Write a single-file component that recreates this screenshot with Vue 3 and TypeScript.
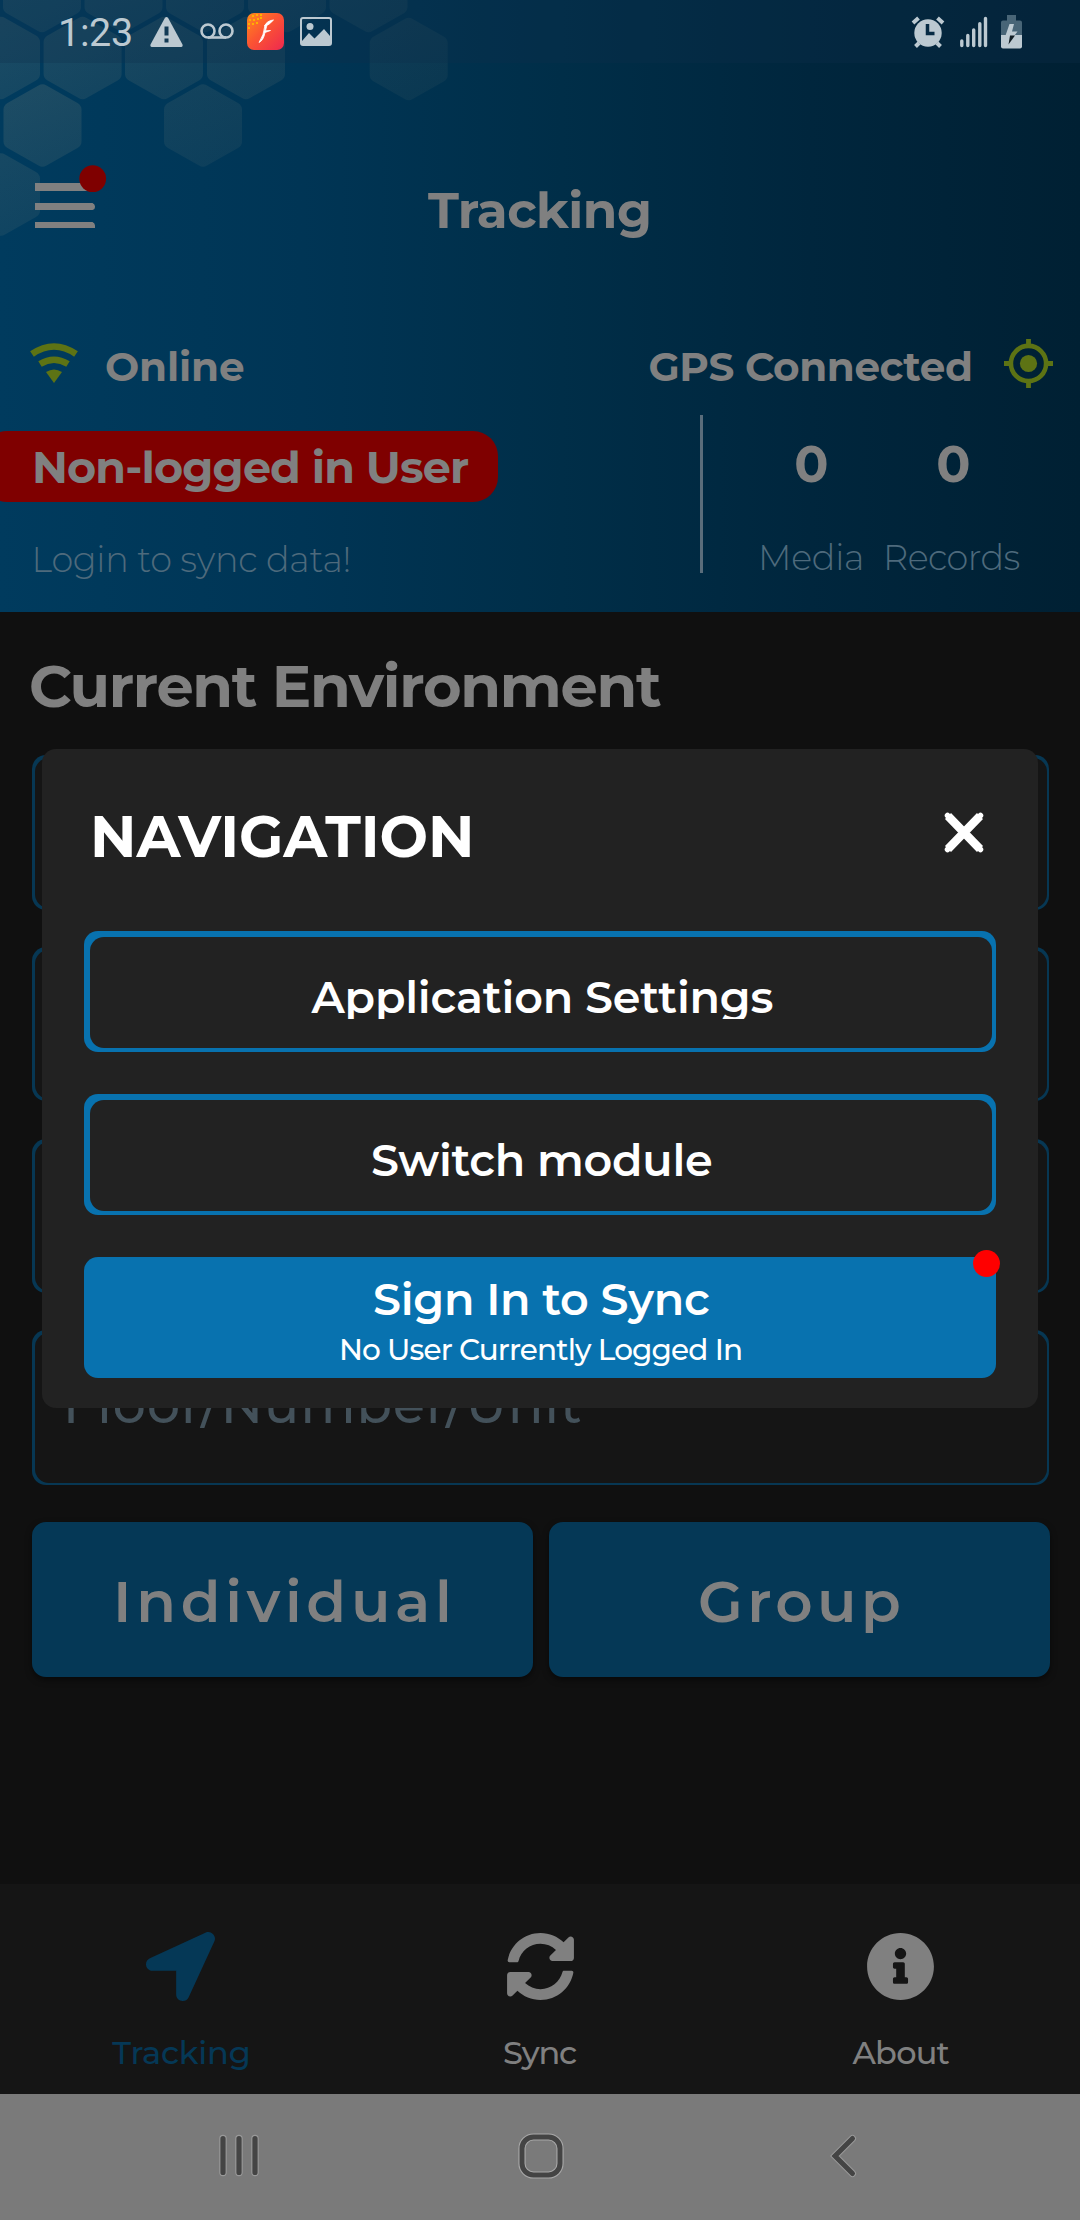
<script setup lang="ts">
import type { Directive } from 'vue'

interface Tab {
  label: string
  width: number
  icon: string
  active?: boolean
}

// Spreads a label's letters so that its visible glyphs span the given width,
// and trims the side bearings so neighbours line up with the glyph edges.
const vFit: Directive<HTMLElement, number> = {
  mounted(el, { value }) {
    const style = getComputedStyle(el)
    const ctx = document.createElement('canvas').getContext('2d')
    const text = (el.textContent ?? '').trim()
    if (!ctx || !text) return
    ctx.font = `${style.fontWeight} ${style.fontSize} ${style.fontFamily}`
    const m = ctx.measureText(text)
    const ink = m.actualBoundingBoxLeft + m.actualBoundingBoxRight
    const spacing = text.length > 1 ? (value - ink) / (text.length - 1) : 0
    el.style.letterSpacing = `${spacing}px`
    el.style.marginLeft = `${m.actualBoundingBoxLeft}px`
    el.style.marginRight = `${-(m.width - m.actualBoundingBoxRight + spacing)}px`
  },
}

const fields: string[] = ['', '', '', 'Floor/Number/Unit']

const stats = [
  { value: 0, label: 'Media', width: 99 },
  { value: 0, label: 'Records', width: 132.5 },
]

const tabs: Tab[] = [
  {
    label: 'Tracking',
    width: 136.5,
    active: true,
    icon: 'M444.52 3.52L28.74 195.42c-47.97 22.39-31.98 92.75 19.19 92.75h175.91v175.91c0 51.17 70.36 67.17 92.75 19.19l191.9-415.78c15.99-38.38-25.59-79.97-63.97-63.97z',
  },
  {
    label: 'Sync',
    width: 73,
    icon: 'M370.72 133.28C339.458 104.008 298.888 87.962 255.848 88c-77.458.068-144.328 53.178-162.791 126.85-1.344 5.363-6.122 9.15-11.651 9.15H24.103c-7.498 0-13.194-6.807-11.807-14.176C33.933 94.924 134.813 8 256 8c66.448 0 126.791 26.136 171.315 68.685L463.03 40.97C478.149 25.851 504 36.559 504 57.941V192c0 13.255-10.745 24-24 24H345.941c-21.382 0-32.09-25.851-16.971-40.971l41.75-41.749zM32 296h134.059c21.382 0 32.09 25.851 16.971 40.971l-41.75 41.75c31.262 29.273 71.835 45.319 114.876 45.28 77.418-.07 144.315-53.144 162.787-126.849 1.344-5.363 6.122-9.15 11.651-9.15h57.304c7.498 0 13.194 6.807 11.807 14.176C478.067 417.076 377.187 504 256 504c-66.448 0-126.791-26.136-171.315-68.685L48.97 471.03C33.851 486.149 8 475.441 8 454.059V320c0-13.255 10.745-24 24-24z',
  },
  {
    label: 'About',
    width: 98,
    icon: 'M256 8C119.043 8 8 119.083 8 256c0 136.997 111.043 248 248 248s248-111.003 248-248C504 119.083 392.957 8 256 8zm0 110c23.196 0 42 18.804 42 42s-18.804 42-42 42-42-18.804-42-42 18.804-42 42-42zm56 254c0 6.627-5.373 12-12 12h-88c-6.627 0-12-5.373-12-12v-24c0-6.627 5.373-12 12-12h12v-64h-12c-6.627 0-12-5.373-12-12v-24c0-6.627 5.373-12 12-12h64c6.627 0 12 5.373 12 12v100h12c6.627 0 12 5.373 12 12v24z',
  },
]

// Honeycomb cells in the header: centre x, centre y, opacity.
const cells: [number, number, number][] = [
  [42, -9, 0.13], [123.5, -9, 0.12], [205, -9, 0.11], [287, -9, 0.1], [368.5, -9, 0.09],
  [1, 58, 0.14], [82.6, 58, 0.13], [164, 58, 0.12], [246, 58, 0.11], [408.7, 59, 0.07],
  [42.5, 125.5, 0.14], [203, 125.5, 0.09],
  [1, 194.5, 0.11],
]
</script>

<template>
  <div class="screen">
    <header class="top">
      <svg class="honeycomb" width="460" height="250" viewBox="0 0 460 250">
        <defs>
          <linearGradient id="cellFill" x1="0" y1="0" x2="0.4" y2="1">
            <stop offset="0" stop-color="#d8bc90" />
            <stop offset="1" stop-color="#d8bc90" stop-opacity="0.7" />
          </linearGradient>
        </defs>
        <path
          v-for="([x, y, o], i) in cells"
          :key="i"
          :transform="`translate(${x} ${y})`"
          :opacity="o"
          fill="url(#cellFill)"
          d="M-4-40Q0-42.500 4-40L35-22.500Q39-20 39-16V16Q39 20 35 22.500L4 40Q0 42.500-4 40L-35 22.500Q-39 20-39 16V-16Q-39-20-35-22.500Z"
        />
      </svg>

      <div class="statusbar">
        <span v-fit="70" class="clock">1:23</span>
        <svg class="s-warn" width="33" height="30" viewBox="0 0 33 30">
          <path d="M15 .8Q16.500-.8 18 .8L32.500 27.500Q33 30 31 30H2Q0 30 .5 27.500Z" fill="#bcc9d1" />
          <path d="M14.500 9.500h4v9h-4zM14.500 21.500h4v4h-4z" fill="#123a55" />
        </svg>
        <svg class="s-mail" width="34" height="16" viewBox="0 0 34 16" fill="none" stroke="#bcc9d1" stroke-width="2.600">
          <circle cx="8" cy="8" r="6.500" /><circle cx="26" cy="8" r="6.500" /><path d="M8 14.500h18" />
        </svg>
        <svg class="s-app" width="37" height="37" viewBox="0 0 37 37">
          <defs>
            <linearGradient id="appFill" x1="0" y1="0" x2="1" y2="1">
              <stop offset="0" stop-color="#ff8a1c" /><stop offset=".45" stop-color="#fb5532" /><stop offset="1" stop-color="#ee2850" />
            </linearGradient>
          </defs>
          <rect width="37" height="37" rx="7" fill="url(#appFill)" />
          <path d="M5 2h2v2h-2zM9 1h2v2h-2zM13 1h2v2h-2zM2 6h2v2h-2zM6 6h2v2h-2zM10 5h2v2h-2zM1 10h2v2h-2zM5 10h2v2h-2zM9 9h2v2h-2zM1 14h2v2h-2zM13 4h2v2h-2z" fill="#ffb000" />
          <path d="M26.500 7Q20 7.500 17.500 13Q22 12.500 26.500 7ZM18 12Q17 22 12 29.500Q16.500 27.500 18 19.500L23.500 17.500L18.500 17.800L20 12Z" fill="#fff" stroke="#fff" stroke-width=".8" />
        </svg>
        <svg class="s-pic" width="32" height="29" viewBox="0 0 32 29">
          <rect x="1" y="1" width="30" height="27" rx="2" fill="none" stroke="#bcc9d1" stroke-width="2" />
          <circle cx="10" cy="9.500" r="3.500" fill="#bcc9d1" />
          <path d="M2 24L9 16L14.500 21.500L24 12L30 19V28H2Z" fill="#bcc9d1" />
        </svg>
        <span class="grow" />
        <svg width="34" height="32" viewBox="0 0 34 32">
          <path d="M8 27L4.500 30.500M26 27L29.500 30.500M2 7L7.500 2M32 7L26.500 2" stroke="#bcc9d1" stroke-width="4" />
          <circle cx="17" cy="17" r="13.700" fill="#bcc9d1" />
          <path d="M16.500 8V17.500H23.500" fill="none" stroke="#072b44" stroke-width="3.500" />
        </svg>
        <svg class="s-signal" width="28" height="32" viewBox="0 0 28 32" stroke="#bcc9d1" stroke-width="3.400" stroke-linecap="round">
          <path d="M1.800 25V29.500M7.800 19.500V29.500M13.700 14V29.500M19.800 7.800V29.500M25.500 2.500V29.500" />
        </svg>
        <svg class="s-battery" width="21" height="34" viewBox="0 0 21 34">
          <path d="M6 0h9v5.500h4q2 0 2 2V20H0V7.500q0-2 2-2h4z" fill="#486577" />
          <path d="M0 20H21V31.500q0 2-2 2H2q-2 0-2-2z" fill="#bcc9d1" />
          <path d="M8.500 9H13L11 16.500H16.500L13.500 20.500H4.500Z" fill="#bcc9d1" />
          <path d="M9 20.500H14L7.500 29.500Z" fill="#111d24" />
        </svg>
      </div>

      <div class="appbar">
        <svg class="burger" width="72" height="64" viewBox="0 0 72 64">
          <path d="M0 18H60V26H0zM0 38H57.500Q60 39 60 41.500Q60 44.500 57.500 45H0zM0 57H57.500Q60 58 60 60.500V63H0z" fill="#808080" />
          <circle cx="57.700" cy="13.700" r="13.400" fill="#7f0000" />
        </svg>
        <h1 v-fit="221" class="title">Tracking</h1>
      </div>

      <div class="connect">
        <svg class="c-icon" width="48" height="40" viewBox="0 0 48 40">
          <g fill="none" stroke="#5d7314" stroke-width="6.600">
            <path d="M2 11Q24-4 46 11" /><path d="M10 21Q24 12.500 38 21" />
          </g>
          <path d="M16 29Q24 24 32 29L24 40Z" fill="#5d7314" />
        </svg>
        <span v-fit="138" class="c-text online">Online</span>
        <span class="grow" />
        <span v-fit="321.5" class="c-text gps">GPS Connected</span>
        <svg class="c-icon" width="49" height="49" viewBox="0 0 49 49" fill="none" stroke="#5d7314">
          <circle cx="24.500" cy="24.500" r="17.600" stroke-width="4.600" />
          <circle cx="24.500" cy="24.500" r="8.600" fill="#5d7314" stroke="none" />
          <path d="M24.500 0V7M24.500 42V49M0 24.500H7M42 24.500H49" stroke-width="4.800" />
        </svg>
      </div>

      <div class="summary">
        <div class="account">
          <div class="pill"><span v-fit="434">Non-logged in User</span></div>
          <div class="hint"><span v-fit="313">Login to sync data!</span></div>
        </div>
        <div class="divider" />
        <div class="stats">
          <div v-for="s in stats" :key="s.label" class="stat">
            <span class="value">{{ s.value }}</span>
            <span v-fit="s.width" class="s-label">{{ s.label }}</span>
          </div>
        </div>
      </div>
    </header>

    <main class="body">
      <h2 class="section"><span v-fit="630">Current Environment</span></h2>
      <div class="fields">
        <div v-for="(f, i) in fields" :key="i" class="field">
          <span v-if="f" v-fit="513">{{ f }}</span>
        </div>
      </div>
      <div class="actions">
        <button class="action"><span v-fit="329">Individual</span></button>
        <button class="action"><span v-fit="199">Group</span></button>
      </div>
    </main>

    <nav class="tabs">
      <div v-for="t in tabs" :key="t.label" class="tab" :class="{ active: t.active }">
        <svg width="69" height="69" viewBox="0 0 512 512"><path :d="t.icon" fill="currentColor" /></svg>
        <span v-fit="t.width" class="t-label">{{ t.label }}</span>
      </div>
    </nav>

    <div class="sysnav">
      <svg width="44" height="46" viewBox="0 0 44 46" stroke-linecap="round">
        <path d="M6 5.500V39.500M22 5.500V39.500M38 5.500V39.500" stroke="#999" stroke-width="7.400" />
        <path d="M6 5.500V39.500M22 5.500V39.500M38 5.500V39.500" stroke="#444" stroke-width="5.200" />
      </svg>
      <svg class="home" width="46" height="46" viewBox="0 0 46 46" fill="none">
        <rect x="4" y="4" width="38" height="38" rx="11.500" stroke="#a8a8a8" stroke-width="7.200" />
        <rect x="4" y="4" width="38" height="38" rx="11.500" stroke="#444" stroke-width="5" />
      </svg>
      <svg class="back" width="30" height="46" viewBox="0 0 30 46" fill="none" stroke-linecap="round">
        <path d="M24.500 5.500L7 23L24.500 40.500" stroke="#999" stroke-width="7" />
        <path d="M24.500 5.500L7 23L24.500 40.500" stroke="#444" stroke-width="5" />
      </svg>
    </div>

    <section class="modal">
      <div class="m-head">
        <h3 v-fit="376" class="m-title">NAVIGATION</h3>
        <svg class="close" width="42" height="43" viewBox="0 0 42 43">
          <path d="M5 5L37 38M37 5L5 38" stroke="#fff" stroke-width="8.400" />
          <path d="M4.500 4.500L37.500 38.500M37.500 4.500L4.500 38.500" stroke="#fff" stroke-width="5.500" stroke-linecap="round" />
        </svg>
      </div>
      <div class="m-list">
        <button class="m-btn"><span v-fit="462" class="m-text clip">Application Settings</span></button>
        <button class="m-btn"><span v-fit="339" class="m-text">Switch module</span></button>
        <button class="m-btn primary">
          <span v-fit="335" class="m-text">Sign In to Sync</span>
          <span v-fit="399" class="m-sub">No User Currently Logged In</span>
          <i class="badge" />
        </button>
      </div>
    </section>
  </div>
</template>

<style>
body {
  margin: 0;
  background: #101010;
}
</style>

<style scoped>
.screen {
  position: relative;
  display: flex;
  flex-direction: column;
  width: 1080px;
  height: 2220px;
  overflow: hidden;
  background: #101010;
  color: #808080;
  font-family: Montserrat, Inter, 'Open Sans', sans-serif;
  white-space: nowrap;
}
h1, h2, h3 {
  margin: 0;
}
svg {
  display: block;
  flex: none;
}
button {
  margin: 0;
  padding: 0;
  border: 0;
  font-family: inherit;
  color: inherit;
}
.grow {
  flex: 1;
}

.top {
  position: relative;
  height: 612px;
  background: linear-gradient(90deg, #003b5e 0%, #003555 28%, #002e48 52%, #00263d 75%, #002033 100%);
}
.honeycomb {
  position: absolute;
  left: 0;
  top: 0;
}
.statusbar {
  position: relative;
  display: flex;
  align-items: flex-start;
  box-sizing: border-box;
  height: 63px;
  padding: 0 58px 0 61px;
  background: rgba(16, 46, 74, 0.28);
}
.statusbar svg {
  margin-top: 16px;
}
.clock {
  font: 400 39.5px/40px Roboto, sans-serif;
  color: #bcc9d1;
  padding-top: 13px;
}
.statusbar .s-warn { margin-left: 18.500px; margin-top: 17px; }
.statusbar .s-mail { margin-left: 17px; margin-top: 23px; }
.statusbar .s-app { margin-left: 13.500px; margin-top: 13px; }
.statusbar .s-pic { margin-left: 16px; margin-top: 17px; }
.statusbar .s-signal { margin-left: 15px; }
.statusbar .s-battery { margin-left: 13px; margin-top: 15px; }

.appbar {
  position: relative;
  display: grid;
  grid-template-columns: 1fr auto 1fr;
  height: 91px;
  margin-top: 102px;
  padding-right: 3px;
}
.burger {
  margin-left: 35px;
}
.title {
  font-size: 50px;
  font-weight: 700;
  line-height: 91px;
}

.connect {
  display: flex;
  align-items: center;
  height: 60px;
  margin-top: 81px;
  padding: 0 27px 0 30px;
}
.c-icon {
  margin-bottom: 8px;
}
.c-icon + .c-text {
  position: relative;
  left: 28px;
}
.c-text {
  font-size: 40.500px;
  font-weight: 700;
  line-height: 58px;
}
.gps {
  position: relative;
  left: -33px;
}

.summary {
  display: flex;
  align-items: flex-start;
}
.account {
  width: 700px;
}
.pill {
  display: flex;
  box-sizing: border-box;
  width: 516px;
  height: 71px;
  margin: 34px 0 0 -18px;
  padding-left: 53px;
  border-radius: 25px;
  background: #7f0000;
  font-size: 44.500px;
  font-weight: 700;
  line-height: 72px;
}
.hint {
  display: flex;
  margin-top: 38px;
  padding-left: 35.500px;
  color: #4e6a7c;
  font-size: 35px;
  font-weight: 300;
  line-height: 40px;
}
.divider {
  width: 3px;
  height: 158px;
  margin-top: 18px;
  background: #5a6d7b;
}
.stats {
  display: flex;
  gap: 26px;
  margin: 37px 0 0 59px;
}
.stat {
  display: flex;
  flex-direction: column;
  align-items: center;
}
.value {
  font-size: 50.500px;
  font-weight: 700;
  line-height: 60px;
}
.s-label {
  margin-top: 44px;
  color: #4e6a7c;
  font-size: 35px;
  font-weight: 300;
  line-height: 40px;
}

.body {
  height: 1272px;
  box-sizing: border-box;
  padding: 43.500px 30px 0 32px;
}
.section {
  display: flex;
  margin-left: -1px;
  font-size: 59px;
  font-weight: 700;
  line-height: 60px;
}
.fields {
  display: flex;
  flex-direction: column;
  gap: 37.300px;
  margin-top: 39.500px;
}
.field {
  position: relative;
  display: flex;
  box-sizing: border-box;
  width: 1017px;
  height: 154.500px;
  padding: 3px 0 0 36px;
  border-radius: 14px;
  background: #073753;
  color: #43515a;
  font-size: 52px;
  font-weight: 500;
  line-height: 144px;
}
.field::before {
  content: '';
  position: absolute;
  inset: 3px 2px 2px 3px;
  border-radius: 14px;
  background: #151515;
}
.field span {
  position: relative;
}
.actions {
  display: flex;
  gap: 16px;
  margin-top: 37px;
}
.action {
  display: flex;
  flex: 1;
  justify-content: center;
  height: 155px;
  border-radius: 14px;
  background: #053856;
  box-shadow: 0 3px 6px rgba(0, 0, 0, 0.5);
  font-size: 58px;
  font-weight: 600;
  line-height: 159px;
}

.tabs {
  display: flex;
  height: 210px;
  background: #151515;
}
.tab {
  display: flex;
  flex: 1;
  flex-direction: column;
  align-items: center;
  padding: 48px 0 0 1px;
}
.tab.active {
  color: #053856;
}
.t-label {
  margin-top: 32px;
  font-size: 32px;
  font-weight: 500;
  line-height: 40px;
}

.sysnav {
  display: flex;
  align-items: center;
  box-sizing: border-box;
  height: 126px;
  padding: 0 0 3px 217px;
  background: #7a7a7a;
}
.home {
  margin-left: 257px;
}
.back {
  margin-left: 264px;
}

.modal {
  position: absolute;
  left: 42px;
  top: 749px;
  box-sizing: border-box;
  width: 996px;
  height: 659px;
  padding: 47px 42px 0;
  border-radius: 14px;
  background: #222;
  color: #fff;
}
.m-head {
  display: flex;
  justify-content: space-between;
  align-items: center;
  height: 80px;
  padding: 0 11px 0 10px;
}
.m-title {
  font-size: 57.500px;
  font-weight: 700;
  line-height: 80px;
}
.close {
  margin-bottom: 7px;
}
.m-list {
  display: flex;
  flex-direction: column;
  gap: 42px;
  margin-top: 55px;
}
.m-btn {
  position: relative;
  display: flex;
  flex-direction: column;
  align-items: center;
  box-sizing: border-box;
  height: 121px;
  padding: 44px 0 0 3px;
  border-radius: 14px;
  background: #0872af;
}
.m-btn:not(.primary)::before {
  content: '';
  position: absolute;
  inset: 6px 4px 4px 6px;
  border-radius: 14px;
  background: #222;
}
.m-btn.primary {
  padding-top: 19.500px;
}
.m-text {
  position: relative;
  font-size: 44.500px;
  font-weight: 600;
  line-height: 44px;
}
.clip {
  overflow: hidden;
}
.m-sub {
  margin-top: 13.500px;
  font-size: 29.500px;
  font-weight: 500;
  line-height: 30px;
}
.badge {
  position: absolute;
  right: -4px;
  top: -7px;
  width: 27px;
  height: 27px;
  border-radius: 50%;
  background: #f00;
}
</style>
